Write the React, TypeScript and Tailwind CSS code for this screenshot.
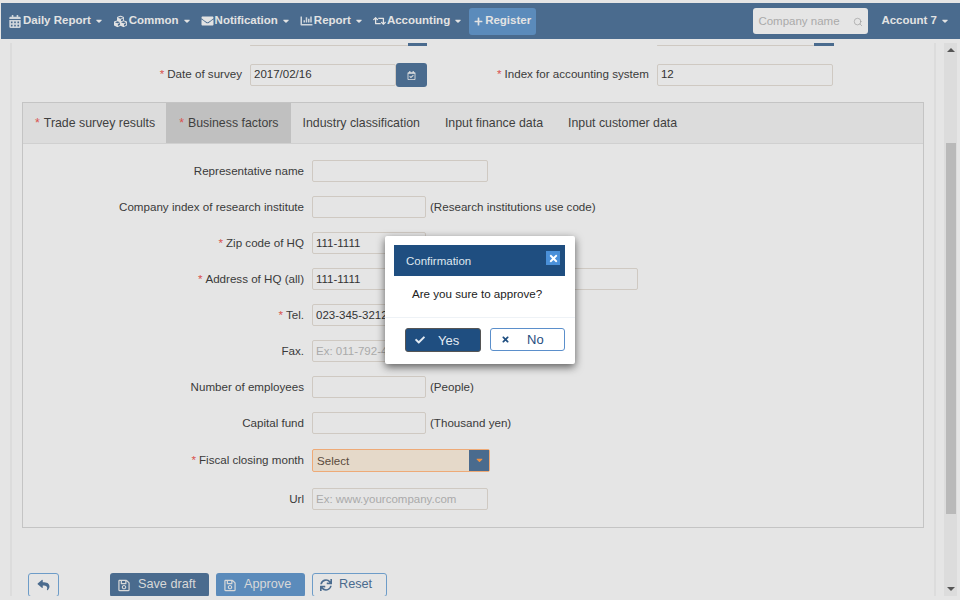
import type { ReactNode } from "react";
import {
  FaCalendarAlt,
  FaCaretDown,
  FaChartBar,
  FaCheck,
  FaCubes,
  FaEnvelope,
  FaPlus,
  FaRegCalendarCheck,
  FaRegSave,
  FaReply,
  FaRetweet,
  FaSync,
  FaTimes,
} from "react-icons/fa";
import { Search } from "lucide-react";

function NavCaret() {
  return <FaCaretDown className="ml-[5px] h-[10px] w-[6px]" />;
}

function NavItem({ icon, label }: { icon: ReactNode; label: string }) {
  return (
    <div className="flex items-center">
      {icon}
      <span className="ml-px">{label}</span>
      <NavCaret />
    </div>
  );
}

function Star({ className = "mr-[3px]" }: { className?: string }) {
  return <span className={`text-[#d9534f] ${className}`}>*</span>;
}

function Input({
  value,
  placeholder,
  className = "w-[176px] pt-px",
}: {
  value?: string;
  placeholder?: string;
  className?: string;
}) {
  return (
    <div
      className={`flex h-[22px] shrink-0 items-center rounded-[2px] border border-[#cfc9c2] bg-[#e5e5e5] px-[3px] text-[11.5px] ${className}`}
    >
      {value ? (
        <span className="text-[#333]">{value}</span>
      ) : (
        <span className="text-[#aaa]">{placeholder}</span>
      )}
    </div>
  );
}

function FormRow({
  label,
  required,
  note,
  className = "",
  children,
}: {
  label: string;
  required?: boolean;
  note?: string;
  className?: string;
  children: ReactNode;
}) {
  return (
    <div className={`flex h-[22px] items-center ${className}`}>
      <div className="w-[289px] pr-[8px] text-right">
        {required && <Star />}
        {label}
      </div>
      {children}
      {note && <span className="ml-[4px]">{note}</span>}
    </div>
  );
}

function Tab({
  label,
  required,
  active,
  className = "",
}: {
  label: string;
  required?: boolean;
  active?: boolean;
  className?: string;
}) {
  return (
    <div
      className={`flex h-full items-center text-[12.35px] ${active ? "bg-[#c0c0c0]" : ""} ${className}`}
    >
      {required && <Star className="mr-[4px]" />}
      {label}
    </div>
  );
}

export default function App() {
  return (
    <div className="relative flex h-[600px] w-[960px] flex-col overflow-hidden bg-[#e5e5e5] pt-[3px] font-['Liberation_Sans',Arial,sans-serif] text-[11.6px] text-[#3a3a3a]">
      {/* Navbar */}
      <header className="z-10 ml-px flex h-[36px] shrink-0 items-center bg-[#4a6b8e] pl-[7px] pr-[12px] text-[11.5px] font-bold text-[#e3e3e3]">
        <div className="flex items-center gap-[11px]">
          <NavItem icon={<FaCalendarAlt className="h-[13px] w-[14px] text-[#d0d6dc]" />} label="Daily Report" />
          <NavItem icon={<FaCubes className="h-[13px] w-[15px]" />} label="Common" />
          <NavItem icon={<FaEnvelope className="h-[12px] w-[13px]" />} label="Notification" />
          <NavItem icon={<FaChartBar className="h-[12px] w-[13px] text-[#d0d6dc]" />} label="Report" />
          <NavItem icon={<FaRetweet className="h-[12px] w-[13px]" />} label="Accounting" />
        </div>
        <div className="ml-[8px] flex h-[27px] w-[67px] items-center justify-center gap-[2px] rounded-[3px] bg-[#5b8bbb]">
          <FaPlus className="h-[9px] w-[9px]" />
          Register
        </div>
        <div className="ml-auto flex h-[26px] w-[115px] items-center justify-between rounded-[3px] bg-[#e5e5e5] px-[5px] pt-px font-normal text-[#aaa]">
          Company name
          <Search className="h-[10px] w-[10px] text-[#999]" strokeWidth={1.5} />
        </div>
        <div className="ml-[13px] flex items-center">
          Account 7
          <NavCaret />
        </div>
      </header>

      {/* Page body */}
      <div className="flex min-h-0 flex-1 py-[4px]">
        <main className="ml-[10px] w-[926px] overflow-hidden border-x-2 border-[#dcdcdc] pl-[10px]">
          <div className="-mt-[19px] flex h-[22px] items-end">
            <div className="ml-[228px] w-[158px] rounded-[2px] border-b border-[#cfc9c2]" />
            <div className="h-[3px] w-[19px] bg-[#4a6b8e]" />
            <div className="ml-[230px] w-[157px] rounded-[2px] border-b border-[#cfc9c2]" />
            <div className="h-[3px] w-[20px] bg-[#4a6b8e]" />
          </div>

          <div className="mt-[18px] flex h-[22px] items-center">
            <div className="-mt-[2px] w-[220px] text-right">
              <Star />
              Date of survey
            </div>
            <Input value="2017/02/16" className="ml-[8px] w-[146px]" />
            <div className="flex h-[24px] w-[31px] items-center justify-center rounded-[3px] bg-[#4a6b8e] text-[#e3e3e3]">
              <FaRegCalendarCheck className="h-[9px] w-[9px]" />
            </div>
            <div className="-mt-[2px] ml-[70px] text-right">
              <Star />
              Index for accounting system
            </div>
            <Input value="12" className="ml-[8px] w-[176px]" />
          </div>

          {/* Tabbed panel */}
          <section className="mt-[16px] h-[426px] w-[902px] border border-[#c4c4c4]">
            <div className="flex h-[41px] border-b border-[#d0d0d0] bg-[#dcdcdc] text-[#3f3f3f]">
              <Tab label="Trade survey results" required className="pl-[12px] pr-[11px]" />
              <Tab label="Business factors" required active className="pl-[13px] pr-[12px]" />
              <Tab label="Industry classification" className="px-[12px]" />
              <Tab label="Input finance data" className="pl-[13px] pr-[12px]" />
              <Tab label="Input customer data" className="pl-[13px]" />
            </div>

            <div className="flex flex-col gap-[14px] pt-[16px]">
              <FormRow label="Representative name">
                <Input />
              </FormRow>
              <FormRow label="Company index of research institute" note="(Research institutions use code)">
                <Input className="w-[114px] pt-px" />
              </FormRow>
              <FormRow label="Zip code of HQ" required>
                <Input value="111-1111" className="w-[114px] pt-px" />
              </FormRow>
              <FormRow label="Address of HQ (all)" required>
                <Input value="111-1111" className="w-[326px] pt-px" />
              </FormRow>
              <FormRow label="Tel." required>
                <Input value="023-345-3212" className="w-[114px] pt-px" />
              </FormRow>
              <FormRow label="Fax.">
                <Input placeholder="Ex: 011-792-4567" className="w-[114px] pt-px" />
              </FormRow>
              <FormRow label="Number of employees" note="(People)">
                <Input className="w-[114px] pt-px" />
              </FormRow>
              <FormRow label="Capital fund" note="(Thousand yen)">
                <Input className="w-[114px] pt-px" />
              </FormRow>
              <FormRow label="Fiscal closing month" required className="mt-px">
                <div className="flex h-[23px] w-[178px] items-center rounded-[2px] border border-[#eeaa77] bg-[#e5d9c9] pl-[4px] text-[#5a4a3c]">
                  <span className="pt-px">Select</span>
                  <div className="ml-auto flex h-full w-[20px] items-center justify-center bg-[#4a6b8e] text-[#ee9144]">
                    <FaCaretDown className="h-[10px] w-[7px]" />
                  </div>
                </div>
              </FormRow>
              <FormRow label="Url" className="mt-[3px]">
                <Input placeholder="Ex: www.yourcompany.com" />
              </FormRow>
            </div>
          </section>

          {/* Form actions */}
          <div className="mt-[45px] flex h-[24px] text-[12.7px]">
            <div className="ml-[6px] flex w-[31px] items-center justify-center rounded-[3px] border border-[#6d9cc8] text-[#4a6b8e]">
              <FaReply className="h-[12px] w-[13px]" />
            </div>
            <div className="ml-[51px] flex w-[99px] items-center rounded-[3px] bg-[#4a6b8e] pl-[8px] text-[#d8d8d8]">
              <FaRegSave className="mr-[8px] h-[13px] w-[12px]" />
              Save draft
            </div>
            <div className="ml-[7px] flex w-[89px] items-center rounded-[3px] bg-[#5b8bbb] pl-[8px] text-[#d8d8d8]">
              <FaRegSave className="mr-[8px] h-[13px] w-[12px]" />
              Approve
            </div>
            <div className="ml-[7px] flex w-[75px] items-center rounded-[3px] border border-[#6d9cc8] pl-[7px] text-[#4a6b8e]">
              <FaSync className="mr-[7px] h-[12px] w-[12px]" />
              Reset
            </div>
          </div>
        </main>

        {/* Scrollbar */}
        <div className="ml-[8px] flex w-[13px] flex-col items-center bg-[#dcdcdc]">
          <div className="mt-[5px] h-0 w-0 border-x-[4px] border-b-[4px] border-x-transparent border-b-[#555]" />
          <div className="mt-[91px] h-[371px] w-[10px] bg-[#b9b9b9]" />
          <div className="mt-auto mb-[5px] h-0 w-0 border-x-[4px] border-t-[4px] border-x-transparent border-t-[#555]" />
        </div>
      </div>

      {/* Confirmation dialog */}
      <div className="absolute left-[385px] top-[236px] z-20 h-[128px] w-[190px] rounded-[2px] bg-white shadow-[0_3px_9px_rgba(0,0,0,0.6)]">
        <div className="ml-[9px] mr-[10px] mt-[9px] flex h-[31px] justify-between bg-[#1f4e80] pl-[12px] pr-[5px] text-[11.5px] text-[#dfe7ef]">
          <span className="mt-[8px]">Confirmation</span>
          <div className="mt-[6px] flex h-[14px] w-[14px] items-center justify-center bg-[#4a90d9] text-white">
            <FaTimes className="h-[11px] w-[11px]" />
          </div>
        </div>
        <p className="ml-[27px] mt-[9px] text-[#222]">Are you sure to approve?</p>
        <div className="mt-[15px] flex gap-[9px] border-t border-[#eef2f6] pl-[20px] pt-[10px] text-[13px]">
          <div className="flex h-[24px] w-[76px] items-center rounded-[3px] border border-[#555] bg-[#1f4e80] pl-[9px] text-[#e3ebf3]">
            <FaCheck className="mr-[13px] h-[10px] w-[10px]" />
            Yes
          </div>
          <div className="flex h-[23px] w-[75px] items-center rounded-[3px] border border-[#5b8fcb] pl-[10px] text-[#1f4e80]">
            <FaTimes className="mr-[17px] h-[9px] w-[9px]" />
            No
          </div>
        </div>
      </div>
    </div>
  );
}
